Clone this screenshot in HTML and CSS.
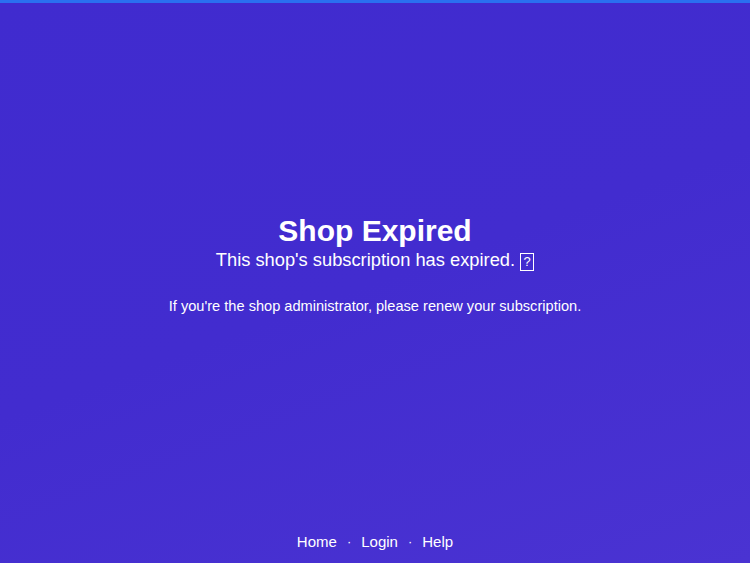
FILE: index.html
```html
<!DOCTYPE html>
<html lang="en">
<head>
<meta charset="utf-8">
<title>Shop Expired</title>
<link rel="stylesheet" href="styles.css">
</head>
<body>
<div class="page">
  <main class="content">
    <h1 class="title">Shop Expired</h1>
    <p class="subtitle">This shop's subscription has expired. <span class="tofu">?</span></p>
    <p class="note">If you're the shop administrator, please renew your subscription.</p>
  </main>
  <footer class="footer">
    <a href="#" class="link">Home</a>
    <span class="dot">·</span>
    <a href="#" class="link">Login</a>
    <span class="dot">·</span>
    <a href="#" class="link">Help</a>
  </footer>
</div>
</body>
</html>
```
FILE: styles.css
```css
html, body {
  margin: 0;
  padding: 0;
  height: 100%;
}
body {
  font-family: "Liberation Sans", Arial, sans-serif;
  color: #ffffff;
  background: linear-gradient(160deg, #402bcf 0%, #422ccf 50%, #4a33d2 100%);
  border-top: 3px solid #2a6ff0;
  box-sizing: border-box;
}
.page {
  min-height: 560px;
  display: flex;
  flex-direction: column;
}
.content {
  flex: 1;
  display: flex;
  flex-direction: column;
  align-items: center;
  justify-content: center;
  text-align: center;
  padding-bottom: 6px;
}
.title {
  margin: 0;
  font-size: 30px;
  font-weight: bold;
  line-height: 34px;
}
.subtitle {
  margin: 0;
  font-size: 18.3px;
  line-height: 24px;
}
.tofu {
  display: inline-block;
  border: 1.5px solid #fff;
  font-size: 13px;
  line-height: 15px;
  width: 14px;
  height: 18px;
  vertical-align: 0;
  box-sizing: border-box;
  text-align: center;
}
.note {
  margin: 25px 0 0;
  font-size: 14.6px;
  line-height: 18px;
}
.footer {
  display: flex;
  justify-content: center;
  align-items: center;
  gap: 10px;
  padding-bottom: 11px;
  font-size: 15px;
  line-height: 20px;
}
.link {
  color: #ffffff;
  text-decoration: none;
}
.dot {
  font-size: 13px;
}
```
